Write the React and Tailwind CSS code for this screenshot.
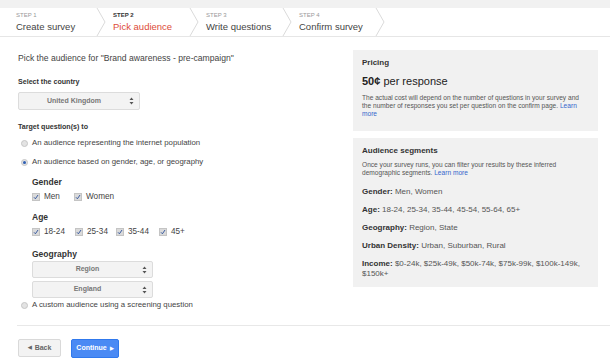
import React from "react";

const steps = [
  { n: "STEP 1", title: "Create survey" },
  { n: "STEP 2", title: "Pick audience", active: true },
  { n: "STEP 3", title: "Write questions" },
  { n: "STEP 4", title: "Confirm survey" },
];

const Chevron = () => (
  <svg width="10" height="28" viewBox="0 0 10 28" className="shrink-0">
    <polyline points="1,0 9,14 1,28" fill="none" stroke="#dadada" strokeWidth="1" />
  </svg>
);

const Arrows = () => (
  <svg width="5" height="8" viewBox="0 0 5 8">
    <path d="M2.5 0.5 L4.5 3 L0.5 3 Z M2.5 7.5 L4.5 5 L0.5 5 Z" fill="#555" />
  </svg>
);

const Select = ({ label, className }) => (
  <div
    className={`flex items-center bg-[#f3f3f3] border border-[#dcdcdc] rounded-[2px] ${className}`}
  >
    <span className="flex-1 text-center text-[7px] font-bold text-[#777]">{label}</span>
    <span className="pr-[5px] flex">
      <Arrows />
    </span>
  </div>
);

const Radio = ({ checked }) => (
  <span className="w-[7px] h-[7px] rounded-full bg-[#e3e3e3] border border-[#c6c6c6] flex items-center justify-center shrink-0">
    {checked && <span className="w-[3px] h-[3px] rounded-full bg-[#2f5fb3]" />}
  </span>
);

const Check = ({ label, w }) => (
  <div className={`flex items-center gap-[4px] ${w}`}>
    <span className="w-[8px] h-[8px] bg-[#dadada] border border-[#c4c4c4] flex items-center justify-center">
      <svg width="6" height="6" viewBox="0 0 6 6">
        <path d="M1 3.3 L2.4 4.8 L5 1" fill="none" stroke="#2a4f9a" strokeWidth="0.9" />
      </svg>
    </span>
    <span className="text-[8.2px] text-[#444]">{label}</span>
  </div>
);

const Segment = ({ k, v }) => (
  <p className="text-[8px] leading-[10px] text-[#555]">
    <span className="font-bold text-[#333]">{k}:</span> {v}
  </p>
);

export default function App() {
  return (
    <div className="w-[610px] h-[362px] bg-white font-['Liberation_Sans',Arial,sans-serif] text-[#444] overflow-hidden">
      {/* top band */}
      <div className="h-[8px] bg-[#f1f1f1]" />

      {/* steps */}
      <div className="h-[29px] border-b border-[#e6e6e6] flex">
        {steps.map((s, i) => (
          <div key={s.n} className="flex">
            <div
              className={`flex flex-col justify-center gap-[1px] ${i === 0 ? "w-[96px] pl-[16px]" : "w-[83px] pl-[7px]"}`}
            >
              <span
                className={`text-[6px] leading-[8px] ${s.active ? "text-[#333] font-bold" : "text-[#999]"}`}
              >
                {s.n}
              </span>
              <span
                className={`text-[9.5px] leading-[13px] whitespace-nowrap ${s.active ? "text-[#dd4b39]" : "text-[#444]"}`}
              >
                {s.title}
              </span>
            </div>
            <Chevron />
          </div>
        ))}
      </div>

      {/* body */}
      <div className="flex pl-[18px] pr-[12px]">
        <div className="flex-1">
          <p className="mt-[14px] h-[14px] leading-[14px] text-[8.6px] text-[#444]">
            Pick the audience for "Brand awareness - pre-campaign"
          </p>
          <p className="mt-[11px] h-[12px] leading-[12px] text-[7.1px] font-bold text-[#333]">
            Select the country
          </p>
          <Select label="United Kingdom" className="mt-[4px] w-[122px] h-[18px]" />
          <p className="mt-[11px] h-[12px] leading-[12px] text-[7.1px] font-bold text-[#333]">
            Target question(s) to
          </p>
          <div className="mt-[3px] h-[14px] flex items-center gap-[4px] pl-[3px]">
            <Radio />
            <span className="text-[7.8px]">An audience representing the internet population</span>
          </div>
          <div className="mt-[5px] h-[14px] flex items-center gap-[4px] pl-[3px]">
            <Radio checked />
            <span className="text-[7.8px]">An audience based on gender, age, or geography</span>
          </div>

          <div className="pl-[14px]">
            <p className="mt-[7px] h-[12px] leading-[12px] text-[8.5px] font-bold text-[#333]">Gender</p>
            <div className="mt-[3px] h-[12px] flex">
              <Check label="Men" w="w-[42px]" />
              <Check label="Women" w="w-[60px]" />
            </div>
            <p className="mt-[8px] h-[12px] leading-[12px] text-[8.5px] font-bold text-[#333]">Age</p>
            <div className="mt-[3px] h-[12px] flex">
              <Check label="18-24" w="w-[43px]" />
              <Check label="25-34" w="w-[41px]" />
              <Check label="35-44" w="w-[43px]" />
              <Check label="45+" w="w-[40px]" />
            </div>
            <p className="mt-[10px] h-[12px] leading-[12px] text-[8.5px] font-bold text-[#333]">Geography</p>
            <Select label="Region" className="mt-[1px] w-[121px] h-[17px]" />
            <Select label="England" className="mt-[3px] w-[121px] h-[17px]" />
          </div>

          <div className="mt-[1px] h-[12px] flex items-center gap-[4px] pl-[3px]">
            <Radio />
            <span className="text-[7.8px]">A custom audience using a screening question</span>
          </div>
        </div>

        {/* right column */}
        <div className="w-[245px] flex flex-col gap-[7px] mt-[13px]">
          <div className="bg-[#f1f1f1] h-[81px] px-[9px] pt-[7px]">
            <p className="text-[8px] leading-[11px] font-bold text-[#333]">Pricing</p>
            <p className="mt-[5px] text-[11px] leading-[16px] text-[#222]">
              <span className="font-bold">50¢</span> per response
            </p>
            <p className="mt-[5px] text-[6.6px] leading-[8px] text-[#555]">
              The actual cost will depend on the number of questions in your survey and the number of
              responses you set per question on the confirm page.{" "}
              <span className="text-[#3366cc]">Learn more</span>
            </p>
          </div>
          <div className="bg-[#f1f1f1] h-[149px] px-[9px] pt-[7px] flex flex-col">
            <p className="text-[8px] leading-[11px] font-bold text-[#333]">Audience segments</p>
            <p className="mt-[5px] pr-[20px] text-[6.6px] leading-[8px] text-[#555]">
              Once your survey runs, you can filter your results by these inferred demographic
              segments. <span className="text-[#3366cc]">Learn more</span>
            </p>
            <div className="mt-[10px] flex flex-col gap-[8px]">
              <Segment k="Gender" v="Men, Women" />
              <Segment k="Age" v="18-24, 25-34, 35-44, 45-54, 55-64, 65+" />
              <Segment k="Geography" v="Region, State" />
              <Segment k="Urban Density" v="Urban, Suburban, Rural" />
              <Segment k="Income" v="$0-24k, $25k-49k, $50k-74k, $75k-99k, $100k-149k, $150k+" />
            </div>
          </div>
        </div>
      </div>

      {/* footer */}
      <div className="mt-[14px] ml-[17px] border-t border-[#e8e8e8]" />
      <div className="mt-[13px] ml-[18px] flex gap-[10px]">
        <button className="w-[43px] h-[18px] bg-[#f3f3f3] border border-[#d9d9d9] rounded-[2px] text-[7px] font-bold text-[#666] flex items-center justify-center gap-[3px]">
          <span className="text-[5px]">◀</span>Back
        </button>
        <button className="w-[48px] h-[19px] bg-[#4a8af4] border border-[#3079ed] rounded-[2px] text-[7px] font-bold text-white flex items-center justify-center gap-[3px]">
          Continue<span className="text-[5px]">▶</span>
        </button>
      </div>
    </div>
  );
}
